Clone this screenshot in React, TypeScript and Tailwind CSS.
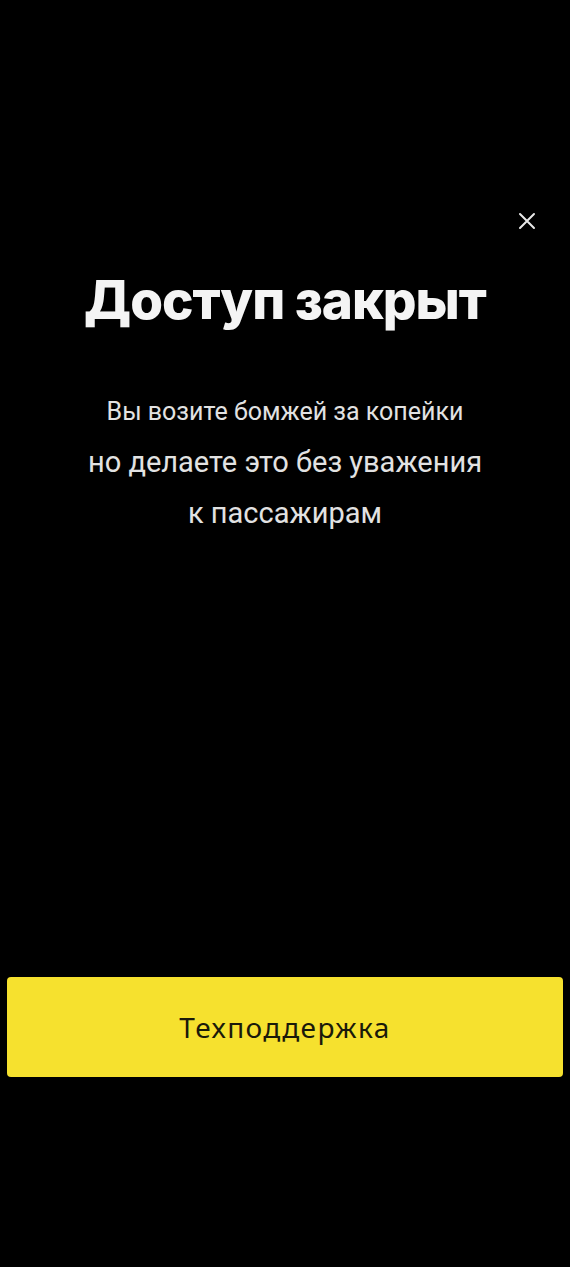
export default function App() {
  return (
    <div className="flex h-[1267px] w-full flex-col bg-black text-white">
      {/* close */}
      <div className="flex justify-end pr-[34px] pt-[212px]">
        <svg width="18" height="18" viewBox="0 0 18 18" className="text-[#e8e8e8]">
          <path d="M2 2 L16 16 M16 2 L2 16" stroke="currentColor" strokeWidth="2" strokeLinecap="round" />
        </svg>
      </div>

      <h1 className="mt-[38px] text-center font-['Inter',sans-serif] text-[53px] font-extrabold leading-[64px] tracking-[-1px] text-[#f4f4f4]">
        Доступ закрыт
      </h1>

      <div className="mt-[54px] text-center font-['Roboto',sans-serif] leading-[51px] text-[#e2e2e2]">
        <p className="text-[25px]">Вы возите бомжей за копейки</p>
        <p className="text-[29px]">но делаете это без уважения</p>
        <p className="text-[29px]">к пассажирам</p>
      </div>

      <div className="flex-1" />

      <div className="px-[7px] pb-[190px]">
        <button className="flex h-[100px] w-full items-center justify-center rounded-[4px] bg-[#f6e12e] font-['Noto_Sans',sans-serif] text-[28px] tracking-[1.4px] text-[#1a1a0a]">
          Техподдержка
        </button>
      </div>
    </div>
  );
}
